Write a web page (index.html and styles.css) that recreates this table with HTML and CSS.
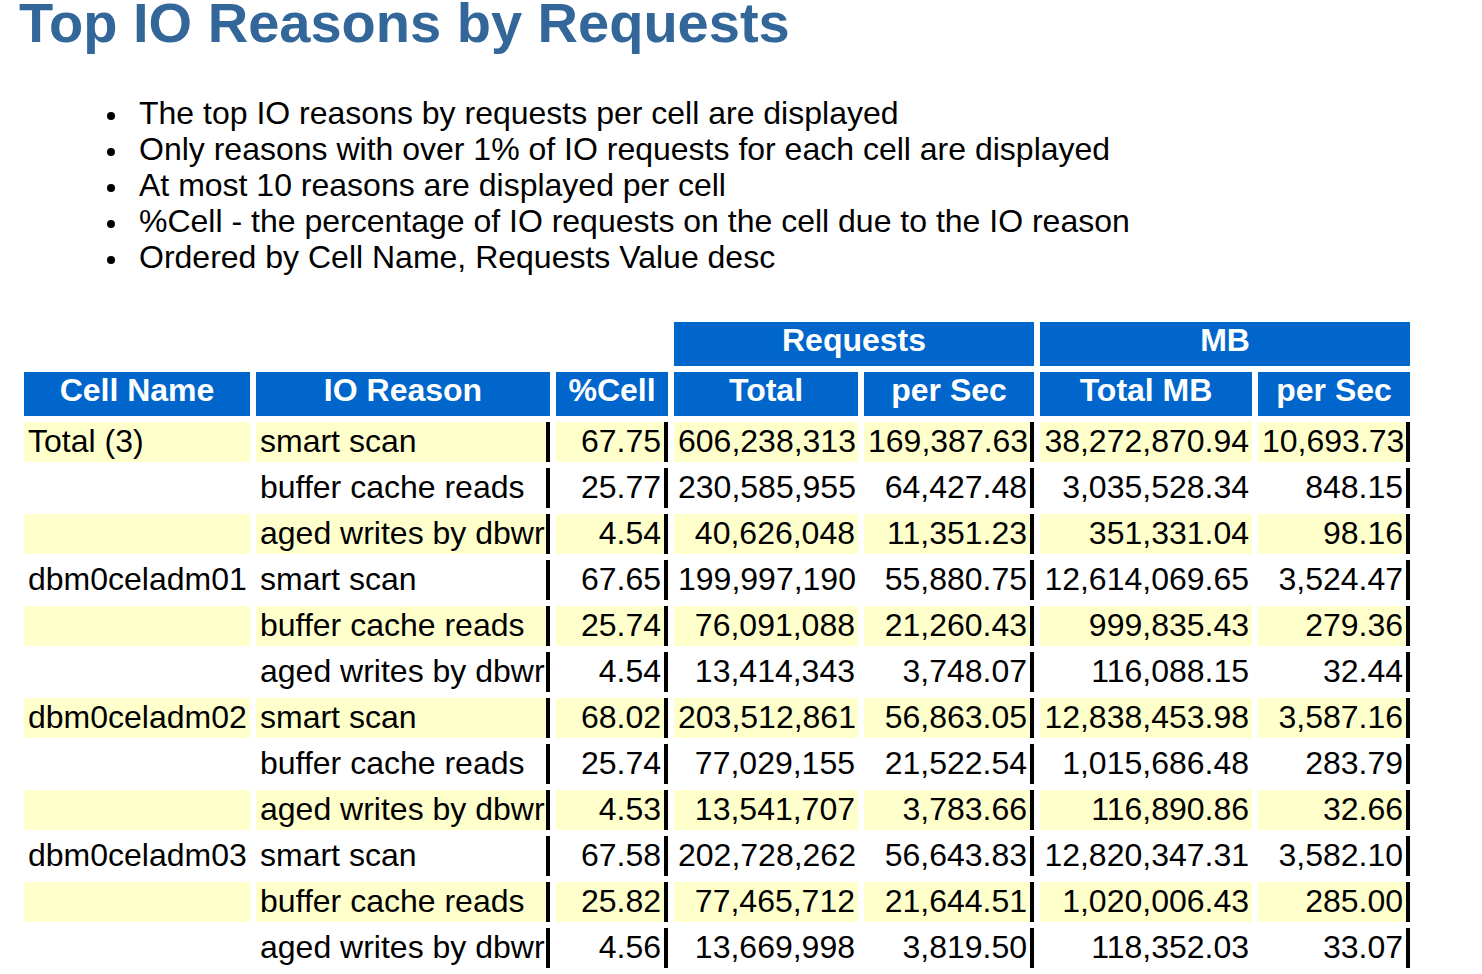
FILE: index.html
```html
<!DOCTYPE html>
<html>
<head>
<meta charset="utf-8">
<title>Top IO Reasons by Requests</title>
<link rel="stylesheet" href="styles.css">
</head>
<body class="awr">
<h2 class="awr-title">Top IO Reasons by Requests</h2>
<ul class="awr-notes">
  <li>The top IO reasons by requests per cell are displayed</li>
  <li>Only reasons with over 1% of IO requests for each cell are displayed</li>
  <li>At most 10 reasons are displayed per cell</li>
  <li>%Cell - the percentage of IO requests on the cell due to the IO reason</li>
  <li>Ordered by Cell Name, Requests Value desc</li>
</ul>
<table class="awr-table">
  <colgroup>
    <col class="c-name"><col class="c-reason"><col class="c-pct"><col class="c-req"><col class="c-reqs"><col class="c-mb"><col class="c-mbs">
  </colgroup>
  <thead>
    <tr>
      <th class="blank" colspan="3"></th>
      <th colspan="2">Requests</th>
      <th colspan="2">MB</th>
    </tr>
    <tr>
      <th>Cell Name</th><th>IO Reason</th><th>%Cell</th><th>Total</th><th>per Sec</th><th>Total MB</th><th>per Sec</th>
    </tr>
  </thead>
  <tbody>
    <tr class="alt"><td>Total (3)</td><td class="br">smart scan</td><td class="num br">67.75</td><td class="num">606,238,313</td><td class="num br">169,387.63</td><td class="num">38,272,870.94</td><td class="num br">10,693.73</td></tr>
    <tr><td></td><td class="br">buffer cache reads</td><td class="num br">25.77</td><td class="num">230,585,955</td><td class="num br">64,427.48</td><td class="num">3,035,528.34</td><td class="num br">848.15</td></tr>
    <tr class="alt"><td></td><td class="br">aged writes by dbwr</td><td class="num br">4.54</td><td class="num">40,626,048</td><td class="num br">11,351.23</td><td class="num">351,331.04</td><td class="num br">98.16</td></tr>
    <tr><td>dbm0celadm01</td><td class="br">smart scan</td><td class="num br">67.65</td><td class="num">199,997,190</td><td class="num br">55,880.75</td><td class="num">12,614,069.65</td><td class="num br">3,524.47</td></tr>
    <tr class="alt"><td></td><td class="br">buffer cache reads</td><td class="num br">25.74</td><td class="num">76,091,088</td><td class="num br">21,260.43</td><td class="num">999,835.43</td><td class="num br">279.36</td></tr>
    <tr><td></td><td class="br">aged writes by dbwr</td><td class="num br">4.54</td><td class="num">13,414,343</td><td class="num br">3,748.07</td><td class="num">116,088.15</td><td class="num br">32.44</td></tr>
    <tr class="alt"><td>dbm0celadm02</td><td class="br">smart scan</td><td class="num br">68.02</td><td class="num">203,512,861</td><td class="num br">56,863.05</td><td class="num">12,838,453.98</td><td class="num br">3,587.16</td></tr>
    <tr><td></td><td class="br">buffer cache reads</td><td class="num br">25.74</td><td class="num">77,029,155</td><td class="num br">21,522.54</td><td class="num">1,015,686.48</td><td class="num br">283.79</td></tr>
    <tr class="alt"><td></td><td class="br">aged writes by dbwr</td><td class="num br">4.53</td><td class="num">13,541,707</td><td class="num br">3,783.66</td><td class="num">116,890.86</td><td class="num br">32.66</td></tr>
    <tr><td>dbm0celadm03</td><td class="br">smart scan</td><td class="num br">67.58</td><td class="num">202,728,262</td><td class="num br">56,643.83</td><td class="num">12,820,347.31</td><td class="num br">3,582.10</td></tr>
    <tr class="alt"><td></td><td class="br">buffer cache reads</td><td class="num br">25.82</td><td class="num">77,465,712</td><td class="num br">21,644.51</td><td class="num">1,020,006.43</td><td class="num br">285.00</td></tr>
    <tr><td></td><td class="br">aged writes by dbwr</td><td class="num br">4.56</td><td class="num">13,669,998</td><td class="num br">3,819.50</td><td class="num">118,352.03</td><td class="num br">33.07</td></tr>
  </tbody>
</table>
</body>
</html>
```
FILE: styles.css
```css
html, body {
  margin: 0;
  padding: 0;
  background: #ffffff;
}

.awr {
  font-family: "Liberation Sans", Arial, Helvetica, sans-serif;
  color: #000000;
  padding: 0 18px;
}

.awr-title {
  margin: 0 0 0 1px;
  font-size: 56px;
  line-height: 46px;
  font-weight: bold;
  color: #336699;
  white-space: nowrap;
}

.awr-notes {
  margin: 49px 0 0 0;
  padding-left: 121px;
  font-size: 32px;
  line-height: 36px;
  list-style: none;
}

.awr-notes li::before {
  content: "";
  display: inline-block;
  width: 8px;
  height: 8px;
  border-radius: 50%;
  background: #000000;
  margin-left: -32px;
  margin-right: 24px;
  vertical-align: 4px;
}

.awr-table {
  margin-top: 41px;
  width: 1398px;
  table-layout: fixed;
  border-collapse: separate;
  border-spacing: 6px;
  font-size: 32px;
}

.c-name { width: 226px; }
.c-reason { width: 294px; }
.c-pct { width: 112px; }
.c-req { width: 184px; }
.c-reqs { width: 170px; }
.c-mb { width: 212px; }
.c-mbs { width: 152px; }

.awr-table th {
  box-sizing: border-box;
  height: 44px;
  padding: 0 4px 7px 4px;
  line-height: 37px;
  font-weight: bold;
  color: #ffffff;
  background: #0066cc;
  text-align: center;
  vertical-align: top;
  white-space: nowrap;
}

.awr-table th.blank {
  background: transparent;
}

.awr-table td {
  box-sizing: border-box;
  height: 40px;
  padding: 1px 3px 2px 4px;
  line-height: 37px;
  background: #ffffff;
  vertical-align: top;
  white-space: nowrap;
}

.awr-table tr.alt td {
  background: #ffffcc;
}

.awr-table td.num {
  text-align: right;
}

.awr-table td.br {
  border-right: 4px solid #000000;
}
```
